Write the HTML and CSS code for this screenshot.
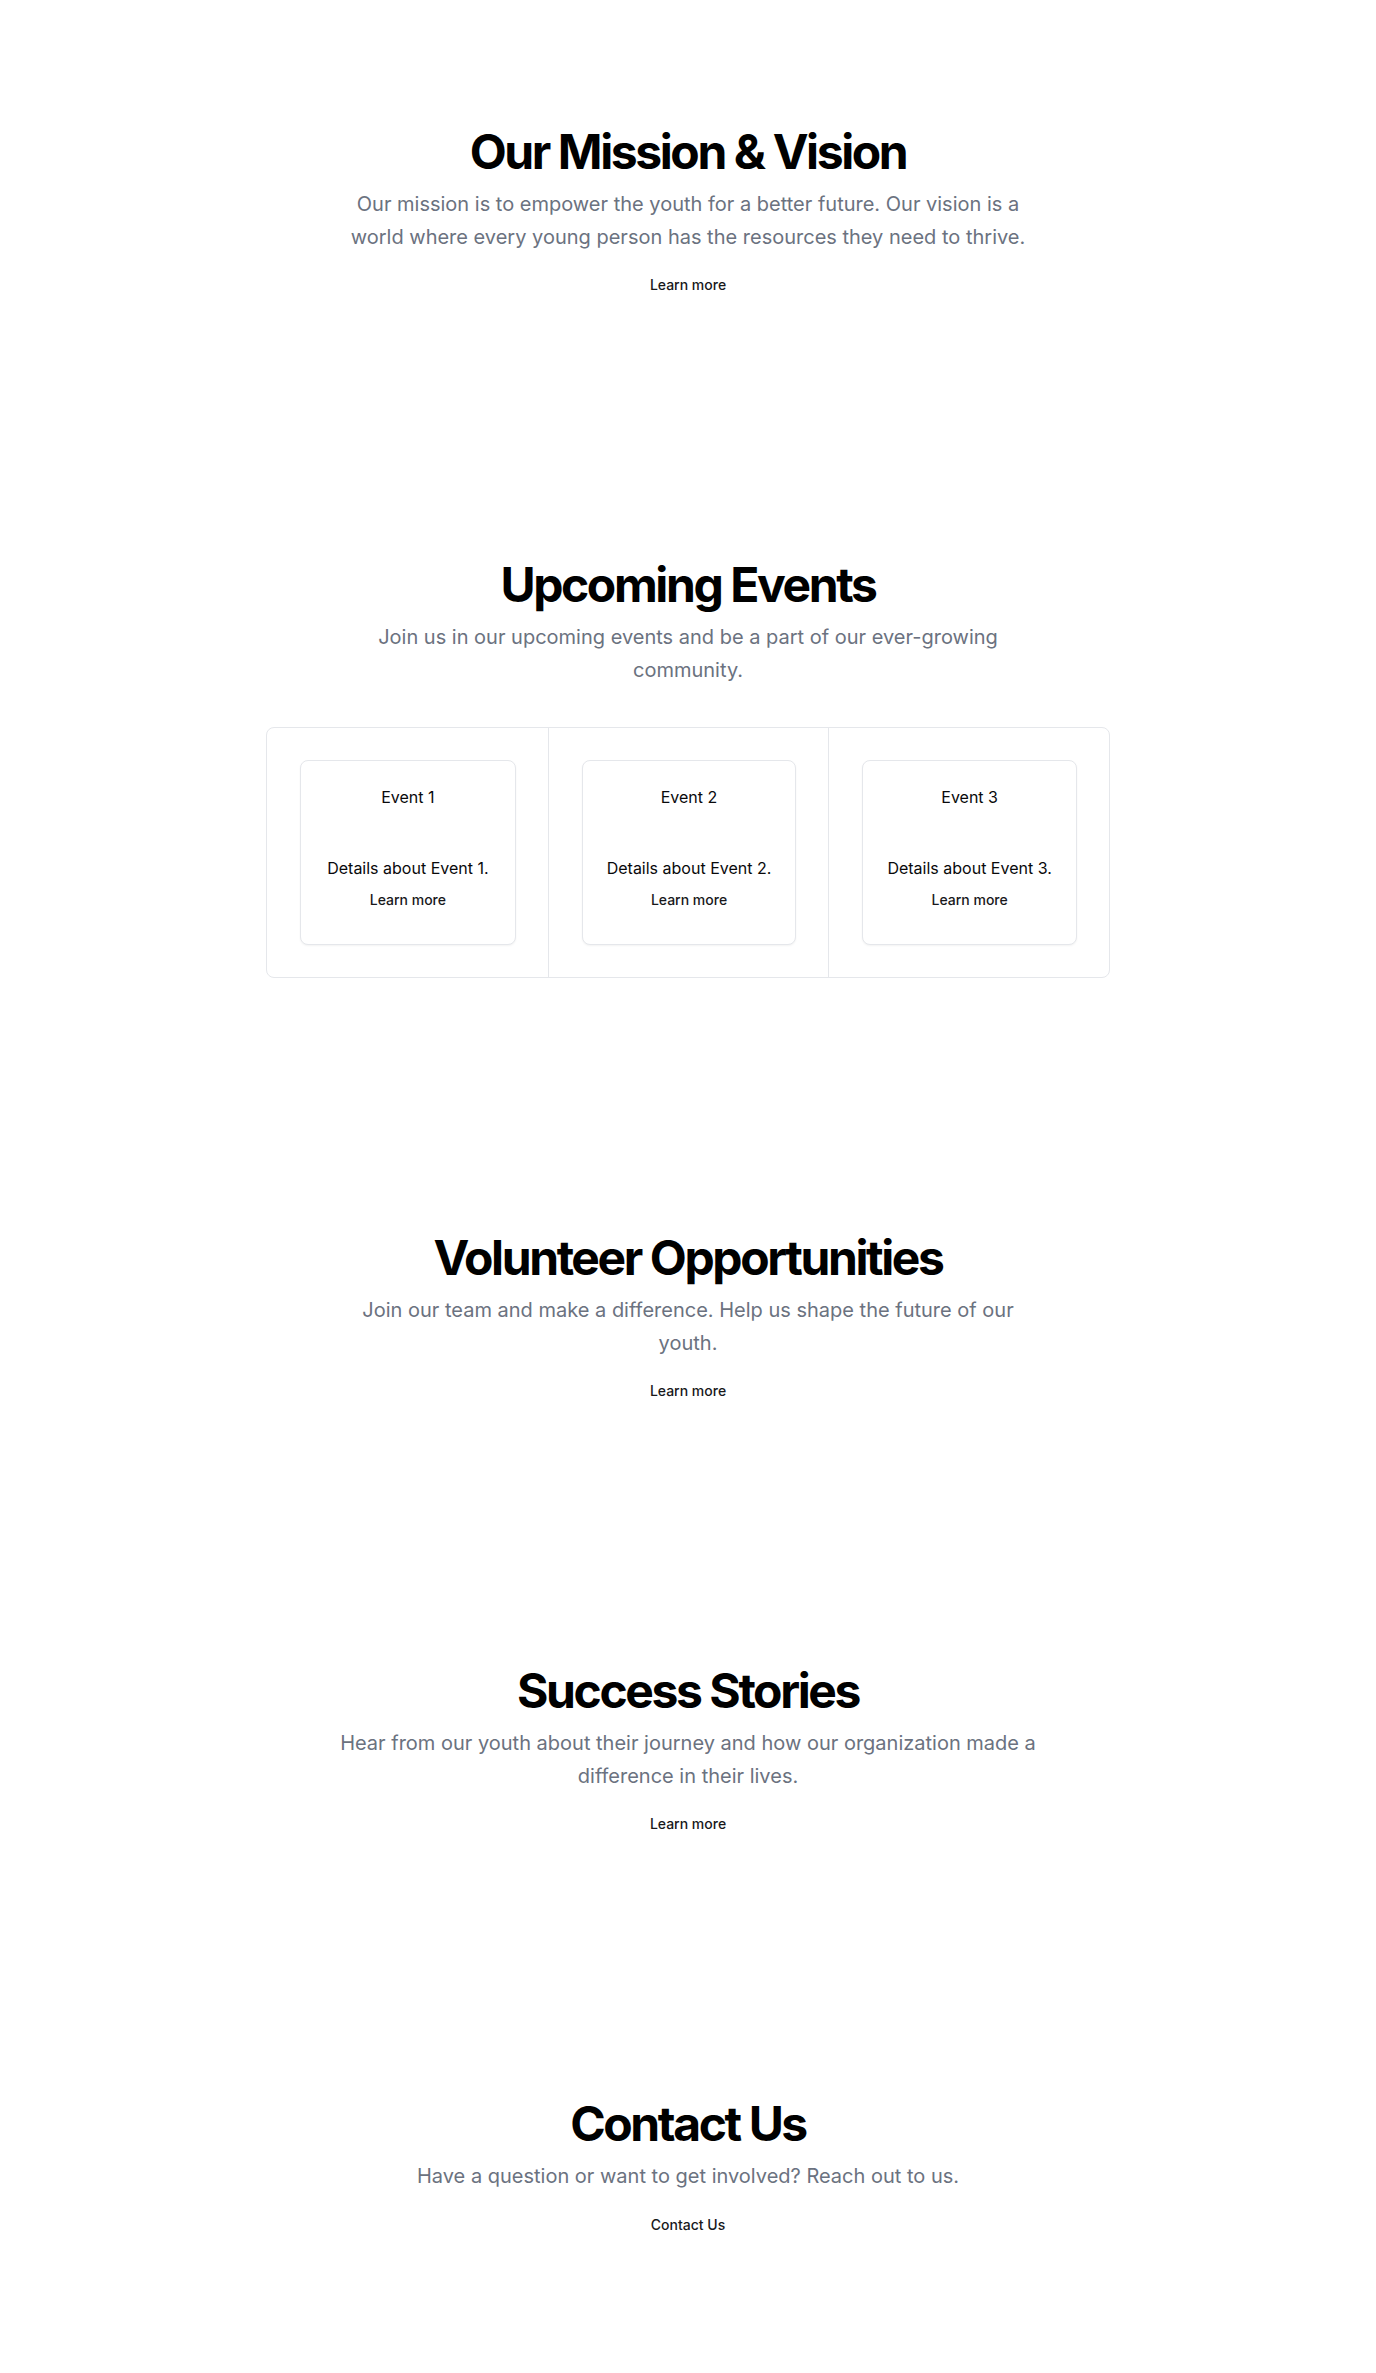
FILE: index.html
```html
<!DOCTYPE html>
<html lang="en">
<head>
<meta charset="utf-8">
<title>Youth Organization</title>
<link rel="stylesheet" href="styles.css">
</head>
<body>
<main>
  <section class="section">
    <div class="stack">
      <h1 class="title">Our Mission &amp; Vision</h1>
      <p class="lead">Our mission is to empower the youth for a better future. Our vision is a world where every young person has the resources they need to thrive.</p>
      <a class="btn" href="#">Learn more</a>
    </div>
  </section>

  <section class="section">
    <div class="stack">
      <h1 class="title">Upcoming Events</h1>
      <p class="lead">Join us in our upcoming events and be a part of our ever-growing community.</p>
      <div class="events">
        <div class="event-col">
          <div class="card">
            <h3 class="card-title">Event 1</h3>
            <p class="card-text">Details about Event 1.</p>
            <a class="btn" href="#">Learn more</a>
          </div>
        </div>
        <div class="event-col">
          <div class="card">
            <h3 class="card-title">Event 2</h3>
            <p class="card-text">Details about Event 2.</p>
            <a class="btn" href="#">Learn more</a>
          </div>
        </div>
        <div class="event-col">
          <div class="card">
            <h3 class="card-title">Event 3</h3>
            <p class="card-text">Details about Event 3.</p>
            <a class="btn" href="#">Learn more</a>
          </div>
        </div>
      </div>
    </div>
  </section>

  <section class="section">
    <div class="stack">
      <h1 class="title">Volunteer Opportunities</h1>
      <p class="lead">Join our team and make a difference. Help us shape the future of our youth.</p>
      <a class="btn" href="#">Learn more</a>
    </div>
  </section>

  <section class="section">
    <div class="stack">
      <h1 class="title">Success Stories</h1>
      <p class="lead">Hear from our youth about their journey and how our organization made a difference in their lives.</p>
      <a class="btn" href="#">Learn more</a>
    </div>
  </section>

  <section class="section">
    <div class="stack">
      <h1 class="title">Contact Us</h1>
      <p class="lead">Have a question or want to get involved? Reach out to us.</p>
      <a class="btn" href="#">Contact Us</a>
    </div>
  </section>
</main>
</body>
</html>
```

FILE: styles.css
```css
* {
  box-sizing: border-box;
}

html, body {
  margin: 0;
  padding: 0;
  background: #ffffff;
}

body {
  font-family: Inter, "Noto Sans", "Liberation Sans", sans-serif;
  color: #09090b;
}

.section {
  width: 100%;
  padding: 128px 24px;
}

.stack {
  display: flex;
  flex-direction: column;
  align-items: center;
  text-align: center;
}

.title {
  margin: 0;
  font-size: 48px;
  line-height: 1;
  font-weight: 700;
  letter-spacing: -0.05em;
  color: #000000;
}

.lead {
  margin: 12px 0 0;
  max-width: 700px;
  font-size: 20px;
  line-height: 1.625;
  color: #6b7280;
}

.btn {
  display: inline-flex;
  align-items: center;
  justify-content: center;
  height: 40px;
  margin-top: 12px;
  padding: 0 16px;
  font-size: 14px;
  line-height: 20px;
  font-weight: 500;
  color: #18181b;
  text-decoration: none;
}

.events {
  display: grid;
  grid-template-columns: repeat(3, 1fr);
  width: fit-content;
  margin-top: 41px;
  border: 1px solid #e5e7eb;
  border-radius: 8px;
}

.event-col {
  padding: 32px 32px 32px 33px;
}

.event-col + .event-col {
  border-left: 1px solid #e5e7eb;
}

.card {
  display: flex;
  flex-direction: column;
  align-items: center;
  padding: 24px;
  border: 1px solid #e5e7eb;
  border-radius: 8px;
  box-shadow: 0 1px 2px rgba(0, 0, 0, 0.05);
  background: #ffffff;
}

.card-title {
  margin: 0;
  font-size: 16px;
  line-height: 24px;
  font-weight: 400;
  color: #09090b;
}

.card-text {
  margin: 47px 0 0;
  font-size: 16px;
  line-height: 24px;
  color: #09090b;
}

.card .btn {
  margin-top: 0;
}
```
